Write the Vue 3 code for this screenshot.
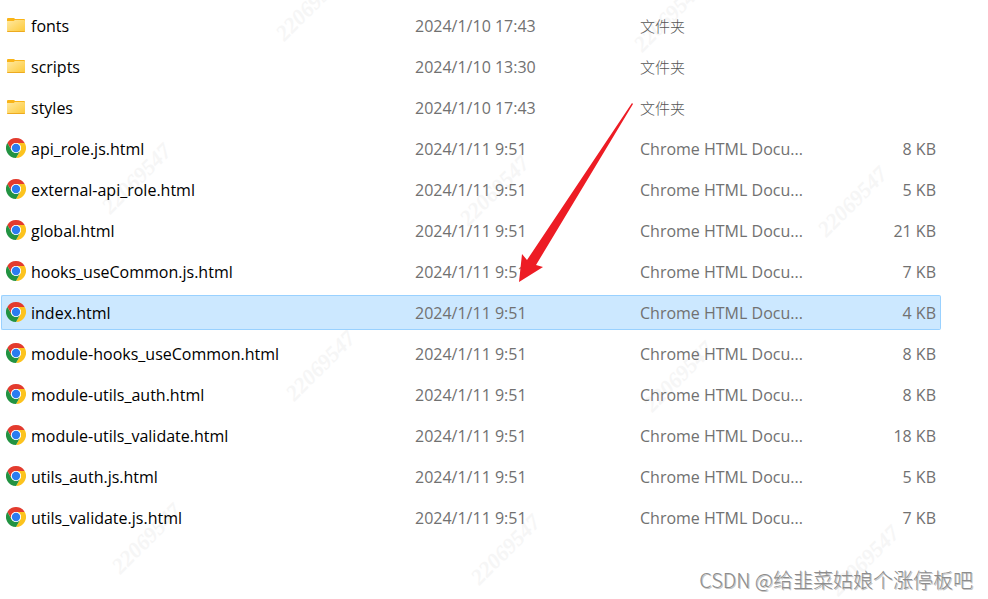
<script setup>
const folder = (name, date) => ({ name, date, kind: 'folder', type: '文件夹', size: '' })
const page = (name, size) => ({
  name,
  date: '2024/1/11 9:51',
  kind: 'chrome',
  type: 'Chrome HTML Docu...',
  size,
})

const files = [
  folder('fonts', '2024/1/10 17:43'),
  folder('scripts', '2024/1/10 13:30'),
  folder('styles', '2024/1/10 17:43'),
  page('api_role.js.html', '8 KB'),
  page('external-api_role.html', '5 KB'),
  page('global.html', '21 KB'),
  page('hooks_useCommon.js.html', '7 KB'),
  { ...page('index.html', '4 KB'), selected: true },
  page('module-hooks_useCommon.html', '8 KB'),
  page('module-utils_auth.html', '8 KB'),
  page('module-utils_validate.html', '18 KB'),
  page('utils_auth.js.html', '5 KB'),
  page('utils_validate.js.html', '7 KB'),
]

const stamps = [
  [310, 5], [668, 16],
  [136, 178], [494, 190], [852, 201],
  [320, 365], [678, 376],
  [146, 538], [505, 549], [864, 560],
]
</script>

<template>
  <main class="explorer">
    <svg class="overlay" aria-hidden="true">
      <g class="stamp">
        <text
          v-for="([x, y], i) in stamps"
          :key="i"
          :transform="`translate(${x} ${y}) rotate(-45)`"
          text-anchor="middle"
          dy="8"
        >22069547</text>
      </g>
    </svg>

    <table class="files">
      <colgroup>
        <col />
        <col class="col-date" />
        <col class="col-type" />
        <col class="col-size" />
      </colgroup>
      <tbody>
        <tr v-for="file in files" :key="file.name" :class="{ selected: file.selected }">
          <td>
            <div class="name">
              <svg v-if="file.kind === 'folder'" class="icon" viewBox="0 0 20 20">
                <defs>
                  <linearGradient id="folder-face" x1="0" y1="0" x2="1" y2="1">
                    <stop offset="0" stop-color="#ffe9a2" />
                    <stop offset="1" stop-color="#fdc937" />
                  </linearGradient>
                </defs>
                <path d="M1 4Q1 3 2 3H7.500Q8.500 3 9 4H18Q19 4 19 5V8H1Z" fill="#f9b418" />
                <path d="M1 6H7Q7.800 6 8.300 5.500L8.800 5H18Q19 5 19 6V16Q19 17 18 17H2Q1 17 1 16Z" fill="url(#folder-face)" />
                <path d="M1 16H19Q19 17 18 17H2Q1 17 1 16Z" fill="#edaa20" />
              </svg>
              <svg v-else class="icon" viewBox="0 0 48 48">
                <circle cx="24" cy="24" r="23" fill="#fff" />
                <path d="M3.215 12A24 24 0 0 1 44.785 12H24A12 12 0 0 0 13.608 30Z" fill="#e33b2e" />
                <path d="M44.785 12A24 24 0 0 1 24 48L34.392 30A12 12 0 0 0 24 12Z" fill="#fcc31e" />
                <path d="M24 48A24 24 0 0 1 3.215 12L13.608 30A12 12 0 0 0 34.392 30Z" fill="#229342" />
                <circle cx="24" cy="24" r="12" fill="#fff" />
                <circle cx="24" cy="24" r="10" fill="#2b7cf0" />
              </svg>
              <span>{{ file.name }}</span>
            </div>
          </td>
          <td>{{ file.date }}</td>
          <td :class="file.kind">{{ file.type }}</td>
          <td class="size">{{ file.size }}</td>
        </tr>
      </tbody>
    </table>

    <svg class="overlay" aria-hidden="true">
      <path d="M632 103L633 104L536 265L543 267L519 282L522 254L527 260Z" fill="#ed1c24" />
    </svg>
    <footer class="credit">CSDN @给韭菜姑娘个涨停板吧</footer>
  </main>
</template>

<style>
body {
  margin: 0;
  background: #fff;
}
</style>

<style scoped>
.explorer {
  position: relative;
  box-sizing: border-box;
  min-height: 100vh;
  padding: 2px 47px 0 1px;
  overflow: hidden;
  display: flex;
  flex-direction: column;
  font-family: "Open Sans", "Noto Sans CJK SC", sans-serif;
  font-size: 16px;
  line-height: 20px;
  color: #717171;
}

.overlay {
  position: absolute;
  inset: 0;
  width: 100%;
  height: 100%;
  pointer-events: none;
}

.stamp {
  font: italic bold 22px "Liberation Serif", serif;
  fill: #f6f6f6;
}

.files {
  position: relative;
  width: 100%;
  table-layout: fixed;
  border-collapse: separate;
  border-spacing: 0 6px;
}

.col-date {
  width: 225px;
}

.col-type {
  width: 196px;
}

.col-size {
  width: 105px;
}

td {
  box-sizing: border-box;
  height: 35px;
  padding: 0;
  border: solid transparent;
  border-width: 1px 0;
  white-space: nowrap;
}

td:first-child {
  border-left-width: 1px;
  border-radius: 2px 0 0 2px;
}

td:last-child {
  border-right-width: 1px;
  border-radius: 0 2px 2px 0;
}

.selected td {
  background: #cce8ff;
  border-color: #99d1ff;
}

.name {
  display: flex;
  align-items: center;
  gap: 5px;
  padding-left: 4px;
  color: #000;
}

.icon {
  flex: none;
  width: 20px;
  height: 20px;
  margin-bottom: 2px;
}

.folder {
  font-size: 15px;
  font-weight: 300;
  color: #555;
}

.size {
  padding-right: 4px;
  text-align: right;
}

.credit {
  position: absolute;
  right: 15px;
  bottom: 4px;
  font-family: "Noto Sans CJK SC", sans-serif;
  font-size: 20px;
  line-height: 30px;
  font-weight: 300;
  color: #8c8c8c;
  text-shadow: 1px 1px 0 #c4c4c4;
}
</style>
